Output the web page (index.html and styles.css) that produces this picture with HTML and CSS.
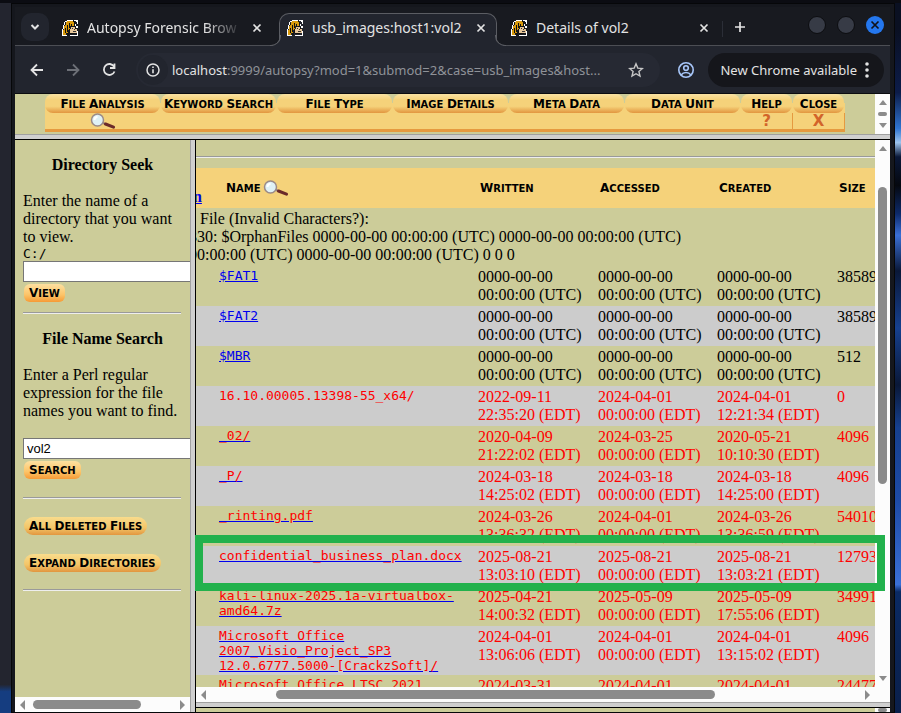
FILE: index.html
```
<!DOCTYPE html>
<html lang="en">
<head>
<meta charset="utf-8">
<title>usb_images:host1:vol2</title>
<link rel="stylesheet" href="styles.css">
</head>
<body>
<svg class="defs" aria-hidden="true">
  <symbol id="dog" viewBox="0 0 16 16" shape-rendering="crispEdges">
    <path fill="#fff" d="M5 0h6v1H5zM12 0h4v4h-1V2h-1V1h-2zM3 1h2v1H3zM2 2h1v3H2zM1 5h1v4H1zM0 9h1v7H0zM13 4h1v2h-1zM14 6h2v2h-2zM15 11h1v5h-1zM0 15h5v1H0zM8 15h8v1H8z"/>
    <path fill="#d99a0b" d="M5 1h6v1H5zM4 2h8v2H4zM3 4h9v2H3zM2 6h6v4H2zM1 10h5v3H1zM1 13h3v2H1z"/>
    <path fill="#111" d="M11 1h1v1h-1zM12 2h1v3h-1zM7 3h1v5H7zM9 4h1v3H9zM5 5h1v7H5zM3 3h1v2H3zM3 8h1v5H3zM11 6h2v1h-2zM13 7h1v2h-1zM7 9h1v4H7zM8 13h5v1H8zM5 13h2v2H5z"/>
    <path fill="#e8c79a" d="M9 7h4v6H9zM8 9h1v4H8zM13 9h2v4h-2z"/>
    <path fill="#333" d="M10 8h1v1h-1zM12 9h1v1h-1zM11 11h3v1h-3z"/>
  </symbol>
  <symbol id="cross" viewBox="0 0 10 10"><path d="M1.5 1.5l7 7M8.500 1.500l-7 7" stroke="currentColor" stroke-width="1.700" fill="none"/></symbol>
  <symbol id="lens" viewBox="0 0 26 16">
    <path d="M12 9.500l3.500 1.500" stroke="#9a8583" stroke-width="2"/>
    <path d="M15.500 11l8 3.200" stroke="#6b2a2a" stroke-width="3" stroke-linecap="round"/>
    <circle cx="7.500" cy="7" r="6" fill="#dff1f5" stroke="#9a8a88" stroke-width="1.500"/>
    <path d="M4.500 7q0-3 3-3" stroke="#fff" stroke-width="2" fill="none"/>
  </symbol>
</svg>
<div class="desktop">
<main class="window">
  <header class="tabs">
    <button class="tab-search" aria-label="Search tabs"><svg width="10" height="10" viewBox="0 0 10 10"><path d="M1.500 3l3.500 3.500L8.500 3" fill="none" stroke="currentColor" stroke-width="2"/></svg></button>
    <div class="tab"><svg class="fav"><use href="#dog"/></svg><span class="tab-title fade">Autopsy Forensic Brow</span><button class="x" aria-label="Close tab"><svg><use href="#cross"/></svg></button></div>
    <div class="tab active"><svg class="fav"><use href="#dog"/></svg><span class="tab-title">usb_images:host1:vol2</span><button class="x" aria-label="Close tab"><svg><use href="#cross"/></svg></button></div>
    <div class="tab last"><svg class="fav"><use href="#dog"/></svg><span class="tab-title">Details of vol2</span><button class="x" aria-label="Close tab"><svg><use href="#cross"/></svg></button></div>
    <button class="new-tab" aria-label="New tab"><svg width="12" height="12" viewBox="0 0 12 12"><path d="M6 1v10M1 6h10" stroke="currentColor" stroke-width="1.700"/></svg></button>
    <div class="controls"><button aria-label="Minimize"></button><button aria-label="Maximize"></button><button class="close" aria-label="Close"><svg width="10" height="10"><use href="#cross"/></svg></button></div>
  </header>
  <div class="toolbar">
    <button class="nav" aria-label="Back"><svg width="16" height="16" viewBox="0 0 16 16"><path d="M14 8H3M8 2.500L2.500 8L8 13.500" fill="none" stroke="currentColor" stroke-width="1.800"/></svg></button>
    <button class="nav dim" aria-label="Forward"><svg width="16" height="16" viewBox="0 0 16 16"><path d="M2 8h11M8 2.500L13.500 8L8 13.500" fill="none" stroke="currentColor" stroke-width="1.800"/></svg></button>
    <button class="nav" aria-label="Reload"><svg width="16" height="16" viewBox="0 0 16 16"><path d="M13 4.500A5.500 5.500 0 1 0 13.500 9.500M13.500 1.500V6H9" fill="none" stroke="currentColor" stroke-width="1.800"/></svg></button>
    <div class="omnibox">
      <span class="info"><svg width="16" height="16" viewBox="0 0 16 16"><circle cx="8" cy="8" r="6" fill="none" stroke="currentColor" stroke-width="1.500"/><path d="M8 7.200v4M8 4.500v1.500" stroke="currentColor" stroke-width="1.600"/></svg></span>
      <span class="url"><b>localhost</b>:9999/autopsy?mod=1&amp;submod=2&amp;case=usb_images&amp;host...</span>
      <button class="star" aria-label="Bookmark"><svg width="16" height="16" viewBox="0 0 16 16"><path d="M8 1.800l1.800 4.300 4.600.4-3.500 3 1.100 4.600L8 11.700l-4 2.400 1.100-4.600-3.500-3 4.600-.4z" fill="none" stroke="currentColor" stroke-width="1.400"/></svg></button>
    </div>
    <button class="profile" aria-label="Profile"><svg width="18" height="18" viewBox="0 0 18 18" fill="none" stroke="currentColor" stroke-width="1.600"><circle cx="9" cy="9" r="7.200"/><circle cx="9" cy="7" r="2.300"/><path d="M4 14q2-2.500 5-2.500t5 2.500"/></svg></button>
    <button class="update">New Chrome available<svg width="4" height="16" viewBox="0 0 4 16" fill="currentColor"><circle cx="2" cy="2" r="1.800"/><circle cx="2" cy="8" r="1.800"/><circle cx="2" cy="14" r="1.800"/></svg></button>
  </div>
  <div class="page">
    <div class="top-frame">
      <nav class="modes">
        <a href="#"><span class="cap"><span>File</span> <span>Analysis</span></span><span class="foot"><svg width="26" height="16"><use href="#lens"/></svg></span></a>
        <a href="#"><span class="cap"><span>Keyword</span> <span>Search</span></span><span class="foot"></span></a>
        <a href="#"><span class="cap"><span>File</span> <span>Type</span></span><span class="foot"></span></a>
        <a href="#"><span class="cap"><span>Image</span> <span>Details</span></span><span class="foot"></span></a>
        <a href="#"><span class="cap"><span>Meta</span> <span>Data</span></span><span class="foot"></span></a>
        <a href="#"><span class="cap"><span>Data</span> <span>Unit</span></span><span class="foot"></span></a>
        <a href="#" class="short"><span class="cap"><span>Help</span></span><span class="foot">?</span></a>
        <a href="#" class="short"><span class="cap"><span>Close</span></span><span class="foot">X</span></a>
      </nav>
      <div class="vbar"><i class="up"></i><i class="thumb"></i><i class="down"></i></div>
    </div>
    <div class="columns">
      <aside class="side">
        <div class="side-body">
          <form>
            <h2>Directory Seek</h2>
            <p><label for="dir">Enter the name of a directory that you want to view.</label></p>
            <code>C:/</code>
            <input id="dir" type="text">
            <button type="button" class="pill"><span>View</span></button>
          </form>
          <hr>
          <form>
            <h2>File Name Search</h2>
            <p class="gap"><label for="find">Enter a Perl regular expression for the file names you want to find.</label></p>
            <input id="find" type="text" value="vol2">
            <button type="button" class="pill"><span>Search</span></button>
          </form>
          <hr>
          <div class="actions">
            <button class="pill round"><span>All</span> <span>Deleted</span> <span>Files</span></button>
            <button class="pill round"><span>Expand</span> <span>Directories</span></button>
          </div>
          <hr>
        </div>
        <div class="hbar"><i class="left"></i><span class="track"><i class="thumb"></i></span><i class="right-arrow"></i></div>
      </aside>
      <div class="right">
        <section class="files">
          <div class="listing">
            <div class="scroll">
              <hr>
              <table>
                <colgroup><col class="c-dir"><col class="c-name"><col class="c-date"><col class="c-date2"><col class="c-date"><col class="c-size"></colgroup>
                <thead><tr><th class="in"><a href="#">n</a></th><th><span class="cap"><span>Name</span><svg width="26" height="16"><use href="#lens"/></svg></span></th><th><span class="cap"><span>Written</span></span></th><th><span class="cap"><span>Accessed</span></span></th><th><span class="cap"><span>Created</span></span></th><th><span class="cap"><span>Size</span></span></th></tr></thead>
                <tbody>
                <tr><td colspan="6" class="error"><span class="indent">File (Invalid Characters?):</span><br>330: $OrphanFiles 0000-00-00 00:00:00 (UTC) 0000-00-00 00:00:00 (UTC)<br>00:00:00 (UTC) 0000-00-00 00:00:00 (UTC) 0 0 0</td></tr>
                <tr><td></td><td><a href="#">$FAT1</a></td><td>0000-00-00 00:00:00 (UTC)</td><td>0000-00-00 00:00:00 (UTC)</td><td>0000-00-00 00:00:00 (UTC)</td><td>38589</td></tr>
                <tr><td></td><td><a href="#">$FAT2</a></td><td>0000-00-00 00:00:00 (UTC)</td><td>0000-00-00 00:00:00 (UTC)</td><td>0000-00-00 00:00:00 (UTC)</td><td>38589</td></tr>
                <tr><td></td><td><a href="#">$MBR</a></td><td>0000-00-00 00:00:00 (UTC)</td><td>0000-00-00 00:00:00 (UTC)</td><td>0000-00-00 00:00:00 (UTC)</td><td>512</td></tr>
                <tr class="del"><td></td><td><code>16.10.00005.13398-55_x64/</code></td><td>2022-09-11 22:35:20 (EDT)</td><td>2024-04-01 00:00:00 (EDT)</td><td>2024-04-01 12:21:34 (EDT)</td><td>0</td></tr>
                <tr class="del"><td></td><td><a href="#"><span>_02/</span></a></td><td>2020-04-09 21:22:02 (EDT)</td><td>2024-03-25 00:00:00 (EDT)</td><td>2020-05-21 10:10:30 (EDT)</td><td>4096</td></tr>
                <tr class="del"><td></td><td><a href="#"><span>_P/</span></a></td><td>2024-03-18 14:25:02 (EDT)</td><td>2024-03-18 00:00:00 (EDT)</td><td>2024-03-18 14:25:00 (EDT)</td><td>4096</td></tr>
                <tr class="del"><td></td><td><a href="#"><span>_rinting.pdf</span></a></td><td>2024-03-26 13:36:32 (EDT)</td><td>2024-04-01 00:00:00 (EDT)</td><td>2024-03-26 13:36:59 (EDT)</td><td>54010</td></tr>
                <tr class="del"><td></td><td><a href="#"><span>confidential_business_plan.docx</span></a></td><td>2025-08-21 13:03:10 (EDT)</td><td>2025-08-21 00:00:00 (EDT)</td><td>2025-08-21 13:03:21 (EDT)</td><td>12793</td></tr>
                <tr class="del"><td></td><td><a href="#"><span>kali-linux-2025.1a-virtualbox-<br>amd64.7z</span></a></td><td>2025-04-21 14:00:32 (EDT)</td><td>2025-05-09 00:00:00 (EDT)</td><td>2025-05-09 17:55:06 (EDT)</td><td>34991</td></tr>
                <tr class="del"><td></td><td><a href="#"><span>Microsoft Office<br>2007_Visio_Project_SP3<br>12.0.6777.5000-[CrackzSoft]/</span></a></td><td>2024-04-01 13:06:06 (EDT)</td><td>2024-04-01 00:00:00 (EDT)</td><td>2024-04-01 13:15:02 (EDT)</td><td>4096</td></tr>
                <tr class="del"><td></td><td><a href="#"><span>Microsoft Office LTSC 2021</span></a></td><td>2024-03-31</td><td>2024-04-01</td><td>2024-04-01</td><td>24477</td></tr>
                </tbody>
              </table>
            </div>
            <div class="vbar tall"><i class="up"></i><span class="track"><i class="thumb"></i></span><i class="down"></i></div>
          </div>
          <div class="hbar wide"><i class="left"></i><span class="track"><i class="thumb"></i></span><i class="right-arrow"></i><span class="corner"></span></div>
          <div class="highlight"></div>
        </section>
        <div class="below"><div class="vbar"><i class="thumb"></i></div></div>
      </div>
    </div>
  </div>
</main>
</div>
</body>
</html>
```
FILE: styles.css
```
* { box-sizing: border-box; }
body { margin: 0; font-family: "Liberation Serif", serif; font-size: 16px; line-height: 18px; color: #000; }
button { border: 0; background: none; padding: 0; font: inherit; color: inherit; }
.defs { position: absolute; width: 0; height: 0; }
.desktop { height: 100vh; overflow: hidden; display: flex; padding: 3px 6px 0 11px;
  background: linear-gradient(#0b0c12, #0b0c12) 0 0 / 100% 3px no-repeat,
    linear-gradient(#23252f 0 96%, #153d80 97%) 0 0 / 11px 100% no-repeat,
    linear-gradient(#0a1022 0 4%, #0c1c4a 13%, #2f74d0 18%, #9cc4ee 20%, #0a1838 22%, #05080f 26%, #0d2a6a 30%, #3a6fd6 33%, #0a1838 38%, #16408f 46%, #0a1838 54%, #16408f 60%, #1d4aa5 70%, #3a6fd6 82%, #0a2a63 83%, #0a1f4a 100%); }
.window { flex: 1; min-width: 0; display: flex; flex-direction: column; background: #17191f; border: 4px solid #15171d; border-width: 4px 5px 1px 4px; outline: 1px solid #060709; outline-offset: -1px; }

/* browser chrome */
.tabs { height: 39px; flex: none; display: flex; align-items: flex-start; background: #181a20; color: #e3e3e3; font: 14px/20px "Noto Sans", sans-serif; box-shadow: inset 0 -1px #4c4e54; }
.tab-search { width: 28px; height: 28px; margin: 6px 3px 0 6px; border-radius: 10px; background: #22252e; display: grid; place-items: center; }
.tab { flex: 0 0 227px; min-width: 0; height: 39px; padding: 2px 17px 0 10px; display: flex; align-items: center; gap: 9px; }
.tab.active { flex-basis: 218px; height: 33px; margin-top: 6px; padding: 0 10px 5px 7px; background: #22252e; border: 1px solid #5b5d63; border-bottom: 0; border-radius: 10px 10px 0 0; position: relative; }
.tab.active::before, .tab.active::after { content: ""; position: absolute; bottom: 0; width: 10px; height: 10px; border-bottom: 1px solid #5b5d63; }
.tab.active::before { left: -10px; border-right: 1px solid #5b5d63; border-bottom-right-radius: 10px; box-shadow: 3px 3px 0 #22252e; clip-path: inset(0); }
.tab.active::after { right: -10px; border-left: 1px solid #5b5d63; border-bottom-left-radius: 10px; box-shadow: -3px 3px 0 #22252e; clip-path: inset(0); }
.tab.last { flex-basis: 226px; padding: 2px 14px 0; background: linear-gradient(#2b2e37, #2b2e37) 100% 60% / 1px 16px no-repeat; }
.fav { width: 16px; height: 16px; flex: none; }
.tab-title { flex: 1; min-width: 0; white-space: nowrap; overflow: hidden; }
.fade { -webkit-mask-image: linear-gradient(90deg, #000 75%, transparent); mask-image: linear-gradient(90deg, #000 75%, transparent); }
.x { width: 10px; height: 10px; flex: none; display: grid; }
.x svg { width: 10px; height: 10px; }
.new-tab { margin: 14px 0 0 11px; height: 12px; display: grid; }
.controls { margin: 9px 6px 0 auto; display: flex; gap: 11px; }
.controls button { width: 18px; height: 18px; border-radius: 50%; background: #373b46; border: 1px solid #0c0d10; display: grid; place-items: center; }
.controls .close { background: #2477ee; border: 0; color: #101218; }
.toolbar { height: 48px; flex: none; display: flex; align-items: center; padding: 0 6px 0 14px; background: #22252e; border-bottom: 1px solid #0b0c0f; color: #e3e3e3; font-family: "Noto Sans", sans-serif; }
.nav { width: 16px; height: 16px; margin-right: 20px; display: grid; }
.dim { color: #6d7077; }
.omnibox { flex: 1; height: 34px; min-width: 0; margin-left: -1px; border-radius: 17px; background: #262933; display: flex; align-items: center; padding: 0 16px 0 2px; }
.info { width: 30px; height: 30px; border-radius: 50%; background: #22252e; display: grid; place-items: center; flex: none; }
.url { flex: 1; margin-left: 4px; font-size: 13px; line-height: 20px; color: #8f9298; white-space: nowrap; overflow: hidden; }
.url b { font-weight: 400; color: #e3e3e3; }
.star { height: 16px; color: #c7c7c7; }
.profile { margin: 0 13px 0 17px; height: 18px; color: #a8c7fa; }
.update { height: 34px; border-radius: 17px; background: #15161b; padding: 0 15px 0 12px; font-size: 13px; display: flex; align-items: center; gap: 8px; }

/* frameset */
.page { flex: 1; min-height: 0; display: flex; flex-direction: column; background: #cccc99; }
.top-frame { height: 46px; flex: none; display: flex; border-bottom: 1px solid #000; box-shadow: inset 0 -4px #cfcfcf, inset 0 -5px #a0a0a0; }
.modes { flex: 1; display: flex; padding-left: 30px; height: 38px; }
.modes a { flex: 0 1 116px; color: #000; text-decoration: none; text-align: center; display: flex; flex-direction: column; background: linear-gradient(#cccc99 9px, #f5d27a 9px); }
.modes a.short { flex-basis: 52px; }
.cap, .pill { font: 700 10px/18px "DejaVu Sans", sans-serif; text-transform: uppercase; white-space: nowrap; }
.cap > span, .pill > span { display: inline-block; }
.cap > span::first-letter, .pill > span::first-letter { font-size: 12px; }
.modes .cap { height: 19px; line-height: 20px; margin-right: 1px; background: linear-gradient(#fae2a2, #f5d27a 30% 65%, #e2963f); border-radius: 8px; }
.foot { height: 19px; background: #f5d27a; border-bottom: 3px solid #e59a40; display: grid; place-items: center; font: 700 15px/16px "DejaVu Sans", sans-serif; color: #d2642a; }
.short .foot { border-right: 1px solid #e59a40; }
.columns { flex: 1; min-height: 0; display: flex; }
.side { width: 181px; flex: none; overflow: hidden; display: flex; flex-direction: column; border-right: 1px solid #000; box-shadow: inset -4px 0 #cfcfcf, inset -5px 0 #a0a0a0; padding-right: 5px; }
.side-body { flex: 1; min-height: 0; overflow: hidden; padding: 16px 8px 0; }
h2 { font-size: 16px; line-height: 18px; margin: 0 0 18px; text-align: center; }
p { margin: 0; }
p.gap { margin-bottom: 18px; }
code { display: block; font: 13px/15px "DejaVu Sans Mono", monospace; }
input { display: block; width: 180px; height: 21px; border: 1px solid #767676; padding: 1px 3px; background: #fff; font: 13px "Liberation Sans", sans-serif; color: #000; }
hr { border: 0; height: 2px; margin: 0; background: linear-gradient(#9a9a9a 50%, #eee 50%); }
.pill { display: block; height: 18px; margin: 2px 0 0 1px; padding: 0 5px; border-radius: 6px; color: #000; background: linear-gradient(#fde0a0, #fcc468 60%, #f79a35); }
.pill.round { border-radius: 9px; background: linear-gradient(#f9dc8c, #f3c568 60%, #e2963f); }
.side-body > hr { margin: 10px 0 16px; width: 158px; }
.side-body form:nth-of-type(2) + hr { margin: 18px 0; }
.actions { display: grid; gap: 19px; justify-items: start; margin-bottom: 17px; }
.actions .pill { margin-top: 0; }
.side-body .actions + hr { margin: 0; }
.right { flex: 1; min-width: 0; display: flex; flex-direction: column; }
.files { flex: 1; min-height: 0; display: flex; flex-direction: column; position: relative; border-bottom: 1px solid #000; box-shadow: inset 0 -4px #cfcfcf, inset 0 -5px #a0a0a0; padding-bottom: 5px; }
.listing { flex: 1; min-height: 0; display: flex; }
.scroll { flex: 1; min-width: 0; overflow: hidden; padding-top: 16px; }
table { table-layout: fixed; width: 760px; margin: 10px 0 0 -8px; border-collapse: collapse; }
.c-dir { width: 29px; } .c-name { width: 259px; } .c-date { width: 120px; } .c-date2 { width: 119px; }
td { padding: 2px; vertical-align: top; }
th { height: 40px; padding: 2px 4px; text-align: left; background: #f5d27a; }
th:nth-child(2) { padding-left: 9px; }
th .cap { display: flex; align-items: center; gap: 2px; }
th.in { vertical-align: bottom; padding-left: 5px; }
a { color: #00e; }
tbody tr:nth-child(odd) { background: #ccc; }
tbody tr:nth-child(even), tbody tr:first-child { background: #cccc99; }
tr td:nth-child(2) { font: 13px/15px "DejaVu Sans Mono", monospace; }
.del, .del span { color: #f00; }
td.error { padding: 2px 0 2px 1px; }
.indent { padding-left: 11px; }
.highlight { position: absolute; top: 395px; left: -1px; right: 5px; height: 56px; border: 8px solid #22b14c; }
.below { height: 4px; flex: none; overflow: hidden; display: flex; justify-content: flex-end; }

/* scroll bars */
.vbar { width: 15px; flex: none; background: #fcfcfc; display: flex; flex-direction: column; align-items: center; }
.top-frame .vbar { height: 40px; padding: 6px 0; justify-content: space-between; }
.hbar { height: 15px; flex: none; background: #fcfcfc; display: flex; align-items: center; padding: 0 5px; }
.up, .down { border: 4px solid transparent; border-top: 0; border-bottom: 5px solid #8b8b8b; }
.down { transform: rotate(180deg); }
.left, .right-arrow { flex: none; border: 5px solid transparent; border-left: 0; border-right: 5px solid #8b8b8b; }
.right-arrow { transform: rotate(180deg); }
.thumb { display: block; background: #8b8b8b; border-radius: 5px; }
.vbar .thumb { width: 9px; height: 4px; flex: none; }
.track { flex: 1; display: block; }
.tall { padding: 6px 0; }
.tall .track { padding-top: 36px; }
.tall .track .thumb { height: 297px; }
.hbar .thumb { height: 9px; width: 108px; margin-left: 8px; }
.wide .thumb { width: 439px; margin-left: 70px; }
.wide .corner { width: 15px; }
```
